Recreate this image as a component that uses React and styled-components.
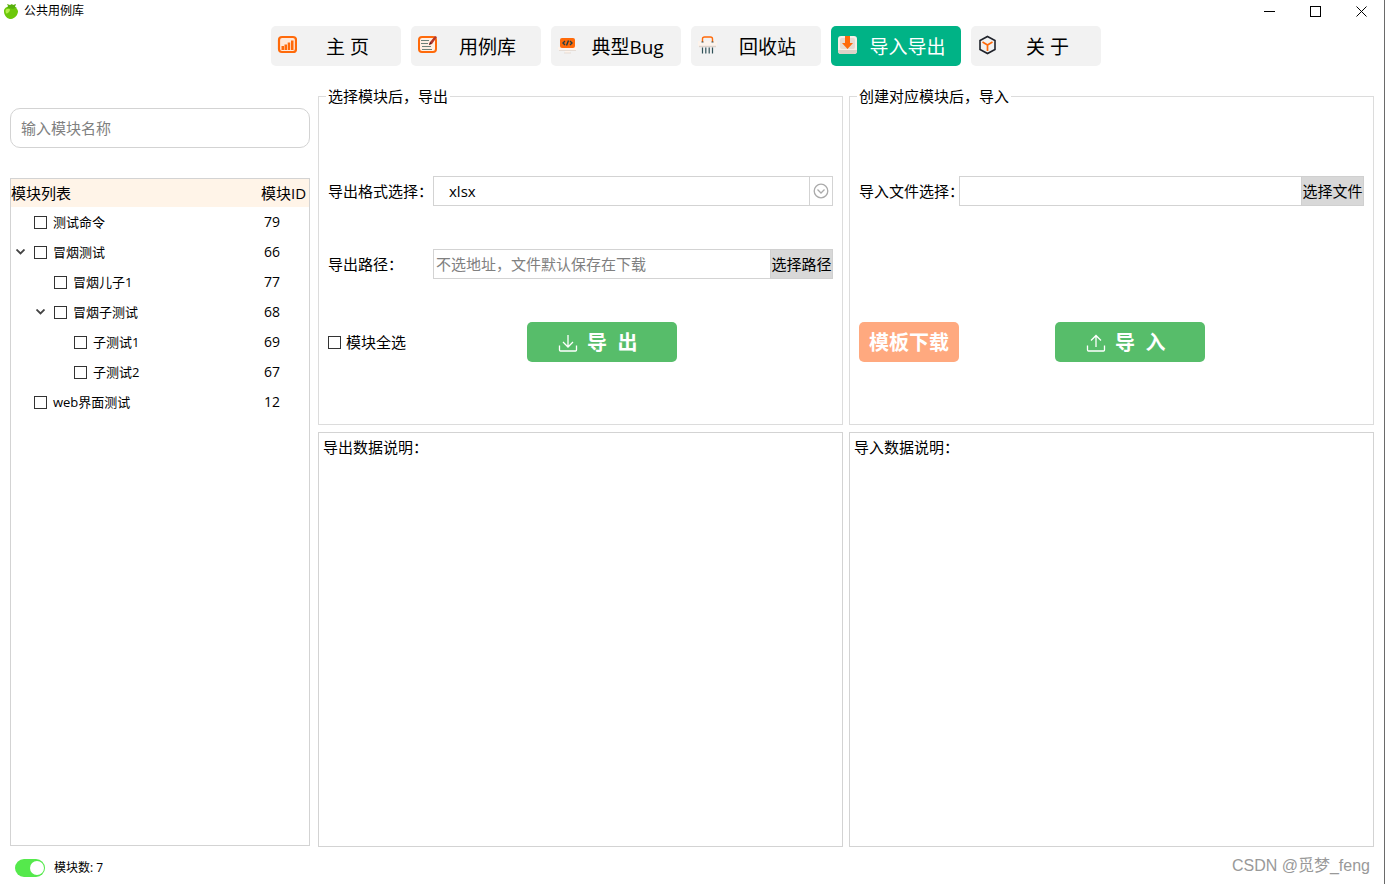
import React, { useState } from 'react';
import styled, { createGlobalStyle } from 'styled-components';

const GlobalStyle = createGlobalStyle`
  * {
    box-sizing: border-box;
  }
  body {
    margin: 0;
    background: #fff;
  }
  body, button, input, select {
    font-family: 'Open Sans', 'Noto Sans CJK SC', sans-serif;
    font-size: 15px;
    color: #000;
  }
  button {
    padding: 0;
    border: none;
    background: none;
    cursor: pointer;
  }
`;

const Window = styled.div`
  display: flex;
  flex-direction: column;
  min-height: 100vh;
  border-right: 1px solid #6a6a6a;
`;

const TitleBar = styled.header`
  display: flex;
  align-items: center;
  height: 22px;
  padding-left: 4px;
`;

const Title = styled.h1`
  flex: 1;
  margin: 0 0 0 6px;
  font-size: 12px;
  font-weight: 400;
  line-height: 24px;
`;

const WindowButton = styled.button`
  display: flex;
  align-items: center;
  justify-content: center;
  width: 46px;
  height: 22px;
`;

const Nav = styled.nav`
  display: flex;
  justify-content: center;
  gap: 10px;
  padding: 4px 12px 21px 0;
`;

const NavButton = styled.button`
  display: grid;
  grid-template-columns: 23px 1fr;
  width: 130px;
  height: 40px;
  border-radius: 5px;
  background: ${props => (props.$active ? '#00b386' : '#f2f2f2')};
  color: ${props => (props.$active ? '#fff' : '#000')};
  font-size: 19px;
  line-height: 42px;

  svg {
    margin: 9px 0 0 6px;
  }
`;

const Main = styled.main`
  flex: 1;
  display: grid;
  grid-template-columns: 300px 1fr;
  gap: 8px;
  padding: 0 10px;
`;

const Sidebar = styled.aside`
  display: flex;
  flex-direction: column;
  gap: 30px;
  padding: 21px 0 1px;
`;

const Search = styled.input`
  width: 100%;
  height: 40px;
  padding: 0 10px;
  border: 1px solid #d3d3d3;
  border-radius: 10px;
  outline: none;

  &::placeholder {
    color: #808080;
  }
`;

const Tree = styled.div`
  flex: 1;
  border: 1px solid #d3d3d3;
`;

const TreeTable = styled.table`
  width: 100%;
  table-layout: fixed;
  border-collapse: collapse;
`;

const HeadCell = styled.th`
  width: ${props => props.$width};
  height: 28px;
  padding: 0;
  background: #fff4e8;
  font-weight: 400;
  line-height: 28px;
  text-align: left;
  white-space: nowrap;
`;

const NameCell = styled.td`
  height: 30px;
  padding: 0 0 0 ${props => 4 + props.$level * 20}px;
`;

const IdCell = styled.td`
  padding: 0 0 0 3px;
  font-size: 14px;
  line-height: 20px;
`;

const TreeItem = styled.div`
  display: flex;
  align-items: center;
`;

const Expander = styled.button`
  display: flex;
  width: 19px;
  height: 14px;
  padding: 4px 0 0 1px;
`;

const Indent = styled.span`
  width: 19px;
`;

const CheckLabel = styled.label`
  display: flex;
  align-items: center;
  gap: ${props => props.$gap || '5px'};
  font-size: ${props => props.$size || '15px'};
  line-height: 20px;
`;

const Checkbox = styled.input.attrs({ type: 'checkbox' })`
  appearance: none;
  width: 13px;
  height: 13px;
  margin: 0;
  border: 1px solid #333;
  background: #fff;

  &:checked {
    background: #333;
    box-shadow: inset 0 0 0 2px #fff;
  }
`;

const Panels = styled.div`
  display: grid;
  grid-template-columns: 1fr 1fr;
  grid-template-rows: auto 1fr;
  gap: 7px 6px;
`;

const Group = styled.fieldset`
  min-width: 0;
  margin: 0;
  padding: 70px 9px 62px;
  border: 1px solid #dcdcdc;
`;

const Legend = styled.legend`
  margin-left: -2px;
  padding: 0 2px;
  line-height: 19px;
`;

const GroupBody = styled.div`
  display: flex;
  flex-direction: column;
  justify-content: space-between;
  height: 186px;
`;

const Field = styled.div`
  display: grid;
  grid-template-columns: ${props => props.$label} 1fr;
  align-items: center;
`;

const FieldLabel = styled.label`
  line-height: 20px;
  white-space: nowrap;
`;

const SelectBox = styled.div`
  display: grid;
  grid-template-columns: 1fr 24px;
`;

const Select = styled.select`
  grid-area: 1 / 1 / 2 / 3;
  appearance: none;
  height: 30px;
  padding: 0 15px;
  border: 1px solid #d3d3d3;
  border-radius: 0;
  background: #fff;
  outline: none;
`;

const SelectArrow = styled.span`
  grid-area: 1 / 2;
  display: flex;
  align-items: center;
  justify-content: center;
  padding-right: 1px;
  border-left: 1px solid #d3d3d3;
  pointer-events: none;
`;

const PathBox = styled.div`
  display: flex;
`;

const PathInput = styled.input`
  flex: 1;
  min-width: 0;
  height: 30px;
  padding: 0 2px;
  border: 1px solid #d3d3d3;
  border-right: none;
  border-radius: 0;
  outline: none;

  &::placeholder {
    color: #808080;
  }
`;

const BrowseButton = styled.button`
  width: 63px;
  height: 30px;
  border: 1px solid #d0d0d0;
  background: #d8d8d8;
  line-height: 28px;
  white-space: nowrap;
`;

const Actions = styled.div`
  display: grid;
  grid-template-columns: ${props => props.$first} 150px;
  align-items: center;
`;

const ActionButton = styled.button`
  display: flex;
  align-items: center;
  gap: 9px;
  height: 40px;
  padding: 2px 0 0 31px;
  border-radius: 5px;
  background: #57bd6a;
  color: #fff;
  font-size: 20px;
  font-weight: 700;
  line-height: 40px;
  white-space: pre;
`;

const TemplateButton = styled.button`
  width: 100px;
  height: 40px;
  padding-top: 2px;
  border-radius: 5px;
  background: #ffa97f;
  color: #fff;
  font-size: 20px;
  font-weight: 700;
  line-height: 38px;
`;

const Note = styled.section`
  padding: 4px;
  border: 1px solid #d3d3d3;
  line-height: 20px;
`;

const Footer = styled.footer`
  display: flex;
  align-items: center;
  justify-content: space-between;
  height: 37px;
  padding: 0 14px 0 15px;
`;

const SwitchLabel = styled.label`
  display: flex;
  align-items: center;
  gap: 9px;
  padding-top: 5px;
  font-size: 12px;
  line-height: 18px;
`;

const Switch = styled.input.attrs({ type: 'checkbox', role: 'switch' })`
  appearance: none;
  display: flex;
  justify-content: ${props => (props.checked ? 'flex-end' : 'flex-start')};
  width: 30px;
  height: 18px;
  margin: 0;
  padding: 2px 1px;
  border-radius: 9px;
  background: ${props => (props.checked ? '#55e94c' : '#c4c4c4')};

  &::before {
    content: '';
    width: 14px;
    height: 14px;
    border-radius: 50%;
    background: #fff;
  }
`;

const Credit = styled.span`
  color: #999;
  font-family: 'Liberation Sans', 'Noto Sans CJK SC', sans-serif;
  font-size: 16px;
  line-height: 24px;
`;

const LogoIcon = () => (
  <svg width="14" height="15" viewBox="0 0 14 15">
    <path d="M0 6C1 3 4 2 7 3c3-1 6 0 7 4 0 4-3 7.500-7 8C3 15-0.500 11 0 6z" fill="#6cc80a" />
    <path d="M3 0l3 1 2-1 1 1 3-1-1 3 2 0-4 2-4-1-2 0 1-2z" fill="#58b00c" />
    <path d="M1.500 7c0-2 3-3 4.500-1.500 0 2-2 4-4 4z" fill="#b4ee4c" />
  </svg>
);

const HomeIcon = () => (
  <svg width="20" height="20" viewBox="0 0 20 20">
    <rect x="2" y="2" width="17" height="15" rx="3" fill="#ffe9da" stroke="#ff6a0a" strokeWidth="2.200" />
    <path d="M4.500 11h2.500v4H4.500zM7.500 9.500h2.500v5.500H7.500zM10.700 7.500h2.500v7.500h-2.500zM14 5.500h2.500v9.500h-2.500z" fill="#ff6a0a" />
  </svg>
);

const CaseIcon = () => (
  <svg width="20" height="20" viewBox="0 0 20 20">
    <rect x="2" y="2" width="17" height="15" rx="3" fill="#fff0e4" stroke="#ff6a0a" strokeWidth="2" />
    <path d="M4 5.500h8M4 8.500h7M5 11.500h9M5 14.500h10" stroke="#6d8279" strokeWidth="1" />
    <path d="M12 10l1-3 5-6 2 1-5 7z" fill="#b3392e" />
    <path d="M12 10l1-3 1.500 1.500z" fill="#552020" />
  </svg>
);

const BugIcon = () => (
  <svg width="20" height="20" viewBox="0 0 20 20">
    <path d="M1 12h19v2q0 1-2 1H3q-2 0-2-1zM8 15h5v3H8z" fill="#fff3ea" />
    <path d="M2 15.500h17M7 18h7" stroke="#e5dcd5" strokeWidth="1" />
    <rect x="3" y="3" width="15" height="10" rx="2" fill="#ff6a0a" />
    <path d="M8 6L6 8l2 2M13 6l2 2-2 2M11.500 5.500l-2 5" fill="none" stroke="#263f43" strokeWidth="1.400" />
  </svg>
);

const RecycleIcon = () => (
  <svg width="20" height="20" viewBox="0 0 20 20">
    <path d="M1 6h19v4q0 2-3 2H4q-3 0-3-2z" fill="#fdf3eb" />
    <path d="M2 11.500h17" stroke="#dcd2ca" strokeWidth="1.400" />
    <path d="M5.500 7V4q0-2 2-2h6q2 0 2 2v3" fill="none" stroke="#ff6a0a" strokeWidth="1.400" />
    <path d="M4.500 7h2M14.500 7h2M5.500 12.500v6M8.800 12.500v6M12.200 12.500v6M15.500 12.500v6" stroke="#315258" strokeWidth="1.200" />
  </svg>
);

const TransferIcon = () => (
  <svg width="20" height="20" viewBox="0 0 20 20">
    <rect x="1" y="1" width="19" height="18" rx="3" fill="#f8eee6" />
    <path d="M1 15h19v1q0 3-3 3H4q-3 0-3-3z" fill="#ddd2c8" />
    <rect x="3" y="3" width="15" height="11" rx="2" fill="#e6dbd2" />
    <path d="M8 1h5v7h3l-5.500 6L5 8h3z" fill="#ff6a0a" />
  </svg>
);

const AboutIcon = () => (
  <svg width="20" height="20" viewBox="0 0 20 20">
    <path d="M10.500 1.500l7.500 4v9l-7.500 4-7.500-4v-9z" fill="none" stroke="#20232b" strokeWidth="1.600" />
    <path d="M5.500 7l5 3 5-3M10.500 10v6" fill="none" stroke="#ff6a0a" strokeWidth="1.700" />
  </svg>
);

const ChevronIcon = () => (
  <svg width="9" height="6" viewBox="0 0 9 6">
    <path d="M0.500 0.500l4 4 4-4" fill="none" stroke="#444" strokeWidth="1.800" />
  </svg>
);

const CircleDownIcon = () => (
  <svg width="16" height="16" viewBox="0 0 16 16" fill="none" stroke="#aaa" strokeWidth="1.300">
    <circle cx="8" cy="8" r="6.800" />
    <path d="M4.500 6.500L8 10l3.500-3.500" />
  </svg>
);

const TrayIcon = ({ up }) => (
  <svg width="20" height="20" viewBox="0 0 20 20" fill="none" stroke="#fff" strokeWidth="1.300">
    <path d="M1.500 12.500v4.500q0 1 1 1h15q1 0 1-1v-4.500" />
    <path d={up ? 'M10 14V2.500M5 7.500l5-5 5 5' : 'M10 2v12M5 9l5 5 5-5'} />
  </svg>
);

const navItems = [
  { name: '主 页', icon: <HomeIcon /> },
  { name: '用例库', icon: <CaseIcon /> },
  { name: '典型Bug', icon: <BugIcon /> },
  { name: '回收站', icon: <RecycleIcon /> },
  { name: '导入导出', icon: <TransferIcon /> },
  { name: '关 于', icon: <AboutIcon /> }
];

const modules = [
  { id: 79, name: '测试命令', level: 0 },
  { id: 66, name: '冒烟测试', level: 0, parent: true },
  { id: 77, name: '冒烟儿子1', level: 1 },
  { id: 68, name: '冒烟子测试', level: 1, parent: true },
  { id: 69, name: '子测试1', level: 2 },
  { id: 67, name: '子测试2', level: 2 },
  { id: 12, name: 'web界面测试', level: 0 }
];

const WindowControls = () => (
  <>
    <WindowButton aria-label="最小化">
      <svg width="11" height="11" viewBox="0 0 11 11">
        <path d="M0 5.500h11" stroke="#000" />
      </svg>
    </WindowButton>
    <WindowButton aria-label="最大化">
      <svg width="11" height="11" viewBox="0 0 11 11">
        <rect x="0.500" y="0.500" width="10" height="10" fill="none" stroke="#000" />
      </svg>
    </WindowButton>
    <WindowButton aria-label="关闭">
      <svg width="11" height="11" viewBox="0 0 11 11">
        <path d="M0.500 0.500l10 10M10.500 0.500l-10 10" stroke="#000" />
      </svg>
    </WindowButton>
  </>
);

const ModuleTree = () => (
  <Tree>
    <TreeTable>
      <thead>
        <tr>
          <HeadCell $width="250px">模块列表</HeadCell>
          <HeadCell>模块ID</HeadCell>
        </tr>
      </thead>
      <tbody>
        {modules.map(item => (
          <tr key={item.id}>
            <NameCell $level={item.level}>
              <TreeItem>
                {item.parent ? (
                  <Expander aria-label="展开">
                    <ChevronIcon />
                  </Expander>
                ) : (
                  <Indent />
                )}
                <CheckLabel $size="13px" $gap="6px">
                  <Checkbox />
                  {item.name}
                </CheckLabel>
              </TreeItem>
            </NameCell>
            <IdCell>{item.id}</IdCell>
          </tr>
        ))}
      </tbody>
    </TreeTable>
  </Tree>
);

const ExportGroup = () => (
  <Group>
    <Legend>选择模块后，导出</Legend>
    <GroupBody>
      <Field $label="105px">
        <FieldLabel htmlFor="format">导出格式选择：</FieldLabel>
        <SelectBox>
          <Select id="format" defaultValue="xlsx">
            <option value="xlsx">xlsx</option>
          </Select>
          <SelectArrow>
            <CircleDownIcon />
          </SelectArrow>
        </SelectBox>
      </Field>
      <Field $label="105px">
        <FieldLabel htmlFor="path">导出路径：</FieldLabel>
        <PathBox>
          <PathInput id="path" type="text" placeholder="不选地址，文件默认保存在下载" />
          <BrowseButton>选择路径</BrowseButton>
        </PathBox>
      </Field>
      <Actions $first="199px">
        <CheckLabel>
          <Checkbox />
          模块全选
        </CheckLabel>
        <ActionButton>
          <TrayIcon />
          {'导  出'}
        </ActionButton>
      </Actions>
    </GroupBody>
  </Group>
);

const ImportGroup = () => (
  <Group>
    <Legend>创建对应模块后，导入</Legend>
    <GroupBody>
      <Field $label="100px">
        <FieldLabel htmlFor="file">导入文件选择：</FieldLabel>
        <PathBox>
          <PathInput id="file" type="text" />
          <BrowseButton>选择文件</BrowseButton>
        </PathBox>
      </Field>
      <Actions $first="196px">
        <TemplateButton>模板下载</TemplateButton>
        <ActionButton>
          <TrayIcon up />
          {'导  入'}
        </ActionButton>
      </Actions>
    </GroupBody>
  </Group>
);

const App = () => {
  const [active, setActive] = useState('导入导出');
  const [enabled, setEnabled] = useState(true);

  return (
    <Window>
      <GlobalStyle />
      <TitleBar>
        <LogoIcon />
        <Title>公共用例库</Title>
        <WindowControls />
      </TitleBar>
      <Nav>
        {navItems.map(item => (
          <NavButton key={item.name} $active={item.name === active} onClick={() => setActive(item.name)}>
            {item.icon}
            <span>{item.name}</span>
          </NavButton>
        ))}
      </Nav>
      <Main>
        <Sidebar>
          <Search type="text" placeholder="输入模块名称" aria-label="输入模块名称" />
          <ModuleTree />
        </Sidebar>
        <Panels>
          <ExportGroup />
          <ImportGroup />
          <Note>导出数据说明：</Note>
          <Note>导入数据说明：</Note>
        </Panels>
      </Main>
      <Footer>
        <SwitchLabel>
          <Switch checked={enabled} onChange={e => setEnabled(e.target.checked)} />
          模块数: {modules.length}
        </SwitchLabel>
        <Credit>CSDN @觅梦_feng</Credit>
      </Footer>
    </Window>
  );
};

export default App;
